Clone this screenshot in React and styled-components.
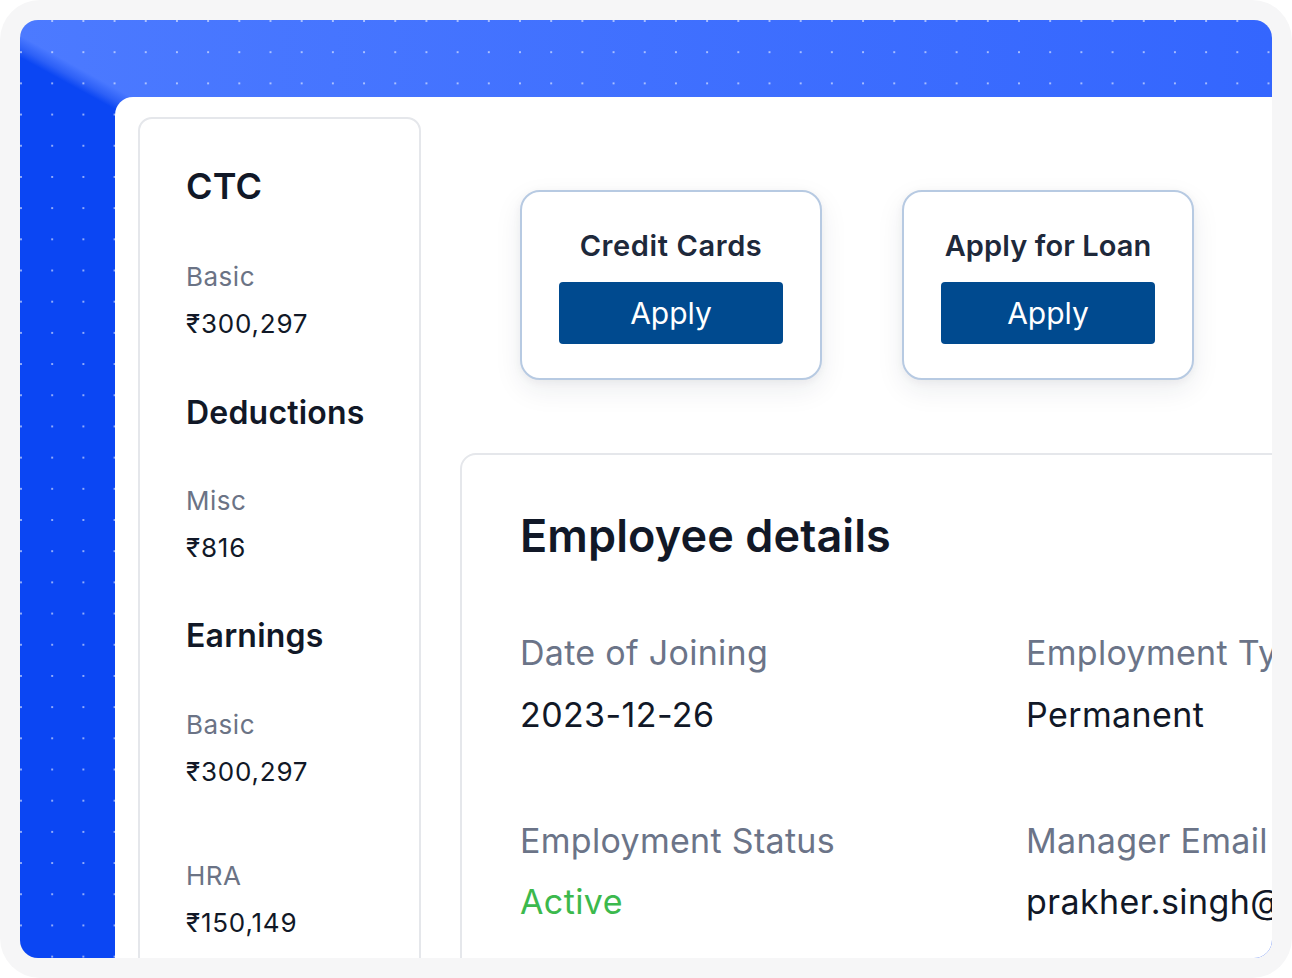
import React from "react";
import styled, { createGlobalStyle } from "styled-components";

const Global = createGlobalStyle`
  html, body { margin: 0; padding: 0; background: #ffffff; }
  body { font-family: "Inter", "Noto Sans", sans-serif; -webkit-font-smoothing: antialiased; }
  * { box-sizing: border-box; }
`;

const Frame = styled.div`
  width: 1292px;
  height: 978px;
  padding: 20px;
  background: #f6f6f7;
  border-radius: 40px;
`;

const Stage = styled.div`
  height: 938px;
  border-radius: 18px;
  overflow: hidden;
  display: flex;
  padding: 77px 0 0 95px;
  background:
    radial-gradient(circle at center, rgba(255, 255, 255, 0.55) 0.9px, transparent 1.4px) -14.6px -14.6px / 31.2px 31.2px,
    linear-gradient(28.7deg, #0b46f3 0, #0b46f3 790px, #2d60f7 798px, #4877ff 808px, transparent 809px),
    linear-gradient(90deg, #4c7aff 0%, #3466fe 100%);
`;

const Panel = styled.div`
  flex-shrink: 0;
  width: 1320px;
  height: 1000px;
  background: #ffffff;
  border-top-left-radius: 18px;
  padding: 20px 0 0 24px;
  display: flex;
  align-items: flex-start;
  gap: 39px;
`;

const Sidebar = styled.aside`
  width: 283px;
  height: 900px;
  flex-shrink: 0;
  margin-left: -1px;
  border: 2px solid #e5e7eb;
  border-radius: 14px;
  padding: 46px 0 0 46px;
  display: flex;
  flex-direction: column;
`;

const SideTitle = styled.h2`
  margin: ${(p) => (p.$first ? "0" : "54px")} 0 0;
  font-size: ${(p) => (p.$big ? "36px" : "32px")};
  line-height: 1.2;
  font-weight: 600;
  color: #111827;
  letter-spacing: 0.2px;
`;

const SideItem = styled.div`
  margin-top: ${(p) => (p.$follow ? "73px" : "53px")};
  display: flex;
  flex-direction: column;
  gap: 16px;
`;

const SideLabel = styled.span`
  font-size: 26px;
  line-height: 1.2;
  color: #6b7385;
  letter-spacing: 0.5px;
`;

const SideValue = styled.span`
  font-size: 26px;
  line-height: 1.2;
  color: #111827;
  letter-spacing: 0.8px;
`;

const Main = styled.div`
  flex: 1;
  display: flex;
  flex-direction: column;
`;

const CardRow = styled.div`
  display: flex;
  gap: 80px;
  margin: 73px 0 0 60px;
`;

const ActionCard = styled.div`
  width: ${(p) => p.$w}px;
  height: 190px;
  background: #ffffff;
  border: 2.5px solid #b7cae2;
  border-radius: 20px;
  box-shadow: 0 10px 28px rgba(30, 41, 59, 0.08), 0 2px 8px rgba(30, 41, 59, 0.05);
  padding: 37px 37px 0;
  display: flex;
  flex-direction: column;
  align-items: center;
`;

const ActionTitle = styled.div`
  font-size: 29px;
  line-height: 1.2;
  font-weight: 600;
  color: #1e293b;
  white-space: nowrap;
  letter-spacing: ${(p) => p.$ls || 0}px;
`;

const ApplyButton = styled.button`
  margin-top: 18px;
  width: 100%;
  height: 62px;
  border: none;
  border-radius: 4px;
  background: #004a8f;
  color: #ffffff;
  font-family: inherit;
  font-size: 30px;
  font-weight: 400;
  cursor: pointer;
`;

const DetailsCard = styled.section`
  margin-top: 73px;
  width: 900px;
  height: 700px;
  border: 2px solid #e5e7eb;
  border-radius: 16px;
  padding: 54px 0 0 58px;
`;

const DetailsTitle = styled.h1`
  margin: 0;
  font-size: 45px;
  line-height: 1.2;
  font-weight: 600;
  color: #111827;
  letter-spacing: 0.1px;
`;

const Grid = styled.div`
  margin-top: 70px;
  display: grid;
  grid-template-columns: 506px 506px;
  row-gap: 85px;
`;

const Field = styled.div`
  display: flex;
  flex-direction: column;
  gap: 21px;
  white-space: nowrap;
`;

const FieldLabel = styled.span`
  font-size: 34px;
  line-height: 1.2;
  color: #6b7488;
  letter-spacing: 0.3px;
`;

const FieldValue = styled.span`
  font-size: 34px;
  line-height: 1.2;
  letter-spacing: 0.4px;
  color: ${(p) => (p.$tone === "ok" ? "#3cb94d" : "#111827")};
`;

const sections = [
  { title: "CTC", big: true, items: [["Basic", "₹300,297"]] },
  { title: "Deductions", items: [["Misc", "₹816"]] },
  { title: "Earnings", items: [["Basic", "₹300,297"], ["HRA", "₹150,149"]] },
];

const fields = [
  ["Date of Joining", "2023-12-26"],
  ["Employment Type", "Permanent"],
  ["Employment Status", "Active", "ok"],
  ["Manager Email", "prakher.singh@company.com"],
];

export default function App() {
  return (
    <>
      <Global />
      <Frame>
        <Stage>
          <Panel>
            <Sidebar>
              {sections.map((s, si) => (
                <React.Fragment key={s.title}>
                  <SideTitle $first={si === 0} $big={s.big}>{s.title}</SideTitle>
                  {s.items.map(([l, v], ii) => (
                    <SideItem key={l + ii} $follow={ii > 0}>
                      <SideLabel>{l}</SideLabel>
                      <SideValue>{v}</SideValue>
                    </SideItem>
                  ))}
                </React.Fragment>
              ))}
            </Sidebar>
            <Main>
              <CardRow>
                <ActionCard $w={302}>
                  <ActionTitle $ls={0.6}>Credit Cards</ActionTitle>
                  <ApplyButton>Apply</ApplyButton>
                </ActionCard>
                <ActionCard $w={292}>
                  <ActionTitle $ls={0.1}>Apply for Loan</ActionTitle>
                  <ApplyButton>Apply</ApplyButton>
                </ActionCard>
              </CardRow>
              <DetailsCard>
                <DetailsTitle>Employee details</DetailsTitle>
                <Grid>
                  {fields.map(([l, v, t]) => (
                    <Field key={l}>
                      <FieldLabel>{l}</FieldLabel>
                      <FieldValue $tone={t}>{v}</FieldValue>
                    </Field>
                  ))}
                </Grid>
              </DetailsCard>
            </Main>
          </Panel>
        </Stage>
      </Frame>
    </>
  );
}
